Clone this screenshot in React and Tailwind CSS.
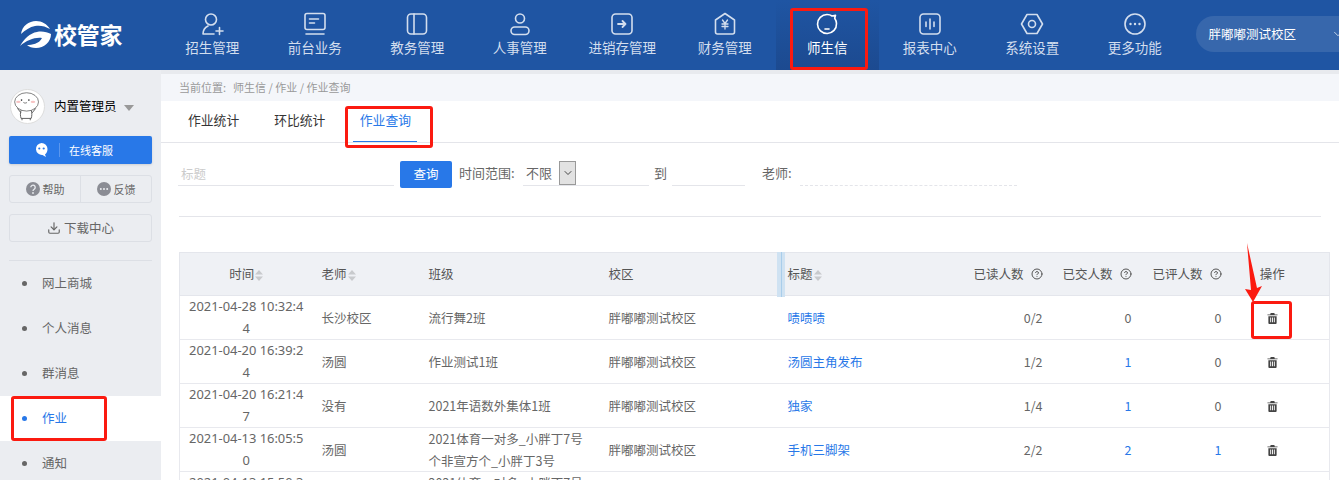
import React from "react";
import { ChevronDown, CircleHelp, Download } from "lucide-react";

const font = { fontFamily: '"Noto Sans CJK SC", sans-serif' };
const latin = { fontFamily: '"Noto Sans", "Noto Sans CJK SC", sans-serif' };

const stroke = { fill: "none", stroke: "currentColor", strokeWidth: 1.6, strokeLinecap: "round", strokeLinejoin: "round" };

const navItems = [
    { name: "招生管理", icon: <><circle cx="11" cy="7.500" r="5.500" /><path d="M3 22c0-4 2-6.500 5-8M3 22h11M16 19h7M19.500 15.500v7" /></> },
    { name: "前台业务", icon: <><rect x="2" y="1.500" width="20" height="16" rx="2" /><path d="M6.500 7h9M6.500 11h5M3 22h18" /></> },
    { name: "教务管理", icon: <><rect x="2.500" y="2" width="19" height="20" rx="3.500" /><path d="M9 2v20" /></> },
    { name: "人事管理", icon: <><circle cx="12" cy="6.500" r="4.500" /><rect x="3" y="15" width="18" height="7.500" rx="3.700" /></> },
    { name: "进销存管理", icon: <><rect x="2" y="2" width="20" height="20" rx="3.500" /><path d="M8 12h7.500M12.500 9l3 3-3 3" strokeWidth="1.800" /></> },
    { name: "财务管理", icon: <><path d="M12 1.500l9.500 6.500v12a2 2 0 0 1-2 2h-15a2 2 0 0 1-2-2V8z" /><path d="M9.500 8l2.500 3.500L14.500 8M9 12h6M9 14.500h6M12 11.500V17" strokeWidth="1.300" /></> },
    { name: "师生信", active: true, icon: <><path d="M12 2.500c2 0 3.800.6 5 1.500l3.500-.8-.8 3c1 1.500 1.800 3.500 1.800 5.300a9.500 9.500 0 1 1-9.500-9z" /><path d="M10 17h4" /></> },
    { name: "报表中心", icon: <><rect x="2" y="2" width="20" height="20" rx="3.500" /><path d="M8 10v4.500M12 7v10M16 10v4.500" /></> },
    { name: "系统设置", icon: <><path d="M7 2.500h10l5.500 9.500-5.500 9.500H7L1.500 12z" /><circle cx="12" cy="12" r="3.500" /></> },
    { name: "更多功能", icon: <><circle cx="12" cy="12" r="10" /><path d="M7.500 12h.01M12 12h.01M16.500 12h.01" strokeWidth="2.400" /></> },
];

const menuItems = [
    { name: "网上商城" },
    { name: "个人消息" },
    { name: "群消息" },
    { name: "作业", active: true },
    { name: "通知" },
];

const rows = [
    { time: "2021-04-28 10:32:44", teacher: "长沙校区", cls: "流行舞2班", title: "啧啧啧", read: "0/2", done: "0", rated: "0" },
    { time: "2021-04-20 16:39:24", teacher: "汤圆", cls: "作业测试1班", title: "汤圆主角发布", read: "1/2", done: "1", rated: "0" },
    { time: "2021-04-20 16:21:47", teacher: "没有", cls: "2021年语数外集体1班", title: "独家", read: "1/4", done: "1", rated: "0" },
    { time: "2021-04-13 16:05:50", teacher: "汤圆", cls: "2021体育一对多_小胖丁7号个非宣方个_小胖丁3号", title: "手机三脚架", read: "2/2", done: "2", rated: "1" },
    { time: "2021-04-13 15:50:36", teacher: "汤圆", cls: "2021体育一对多_小胖丁7号个非宣方个_小胖丁3号", title: "手机三脚架", read: "2/2", done: "2", rated: "1" },
];

const Logo = () => (
    <svg viewBox="0 0 31 28" className="h-[28px] w-[31px] text-white" fill="currentColor">
        <path d="M1 13C2 5 9 0 16 0c6 0 11 3 14 8-5-3-10-4-15-3-5 1-10 4-14 8z" />
        <path d="M0 25c4-7 10-13 17-14 5-1 10 0 14 2 0 8-7 14-15 14-4 0-7-1-9-3 5 0 12-1 15-7-7-1-15 2-22 8z" />
    </svg>
);

const SortIcon = () => (
    <svg viewBox="0 0 8 11" className="ml-px inline-block h-[11px] w-2 text-[#c8cacd]" fill="currentColor">
        <path d="M4 0l4 4.500H0zM0 6.500h8L4 11z" />
    </svg>
);

const Trash = () => (
    <svg viewBox="0 0 12 12" className="mx-auto mt-[2px] h-[11px] w-[11px] text-[#444]" fill="currentColor">
        <path d="M4 0h4l.5 1.500H11.500v1h-11v-1H3.500zM1.500 3.500h9V11a1 1 0 0 1-1 1h-7a1 1 0 0 1-1-1zM3.500 5v5h1V5zM5.500 5v5h1V5zM7.500 5v5h1V5z" />
    </svg>
);

const Avatar = () => (
    <svg viewBox="0 0 36 36" className="h-[35px] w-[35px] rounded-full border border-[#ddd] bg-white">
        <ellipse cx="17" cy="13" rx="13" ry="10" fill="#fff" stroke="#555" strokeWidth="0.800" />
        <path d="M11 22c-1 3-1 6 0 9h11c1-3 1-6 0-9M7 20l4 5M27 20l-4 5M12 31v2M21 31v2" fill="none" stroke="#555" strokeWidth="1" />
        <circle cx="11.500" cy="11" r="0.900" fill="#333" />
        <circle cx="19.500" cy="11" r="0.900" fill="#333" />
        <ellipse cx="8" cy="13" rx="2.500" ry="1.200" fill="#f7c3c3" />
        <ellipse cx="24" cy="13" rx="2.500" ry="1.200" fill="#f7c3c3" />
        <path d="M13.500 13.500c1 1 3 1 4 0" fill="none" stroke="#333" strokeWidth="0.700" />
    </svg>
);

const ChatFace = () => (
    <svg viewBox="0 0 13 14" className="ml-[26px] h-[14px] w-[13px]">
        <path d="M6.500 0a6 6 0 0 1 6 6c0 2.500-1 4.500-2.500 5.500l1 2.500-3.500-2A6 6 0 0 1 6.500 0z" fill="#fff" />
        <circle cx="4.300" cy="5.500" r="1.100" fill="#2878e8" />
        <circle cx="8.700" cy="5.500" r="1.100" fill="#2878e8" />
    </svg>
);

const HelpDisc = () => (
    <svg viewBox="0 0 14 14" className="h-[14px] w-[14px]">
        <circle cx="7" cy="7" r="7" fill="#8a8c94" />
        <path d="M4.800 5.300a2.200 2.200 0 1 1 3.400 1.900c-.8.500-1.200.9-1.200 1.800" fill="none" stroke="#ebedf1" strokeWidth="1.300" />
        <circle cx="7" cy="11" r="0.900" fill="#ebedf1" />
    </svg>
);

const FeedbackDisc = () => (
    <svg viewBox="0 0 14 14" className="h-[14px] w-[14px]">
        <circle cx="7" cy="7" r="7" fill="#8a8c94" />
        <circle cx="3.800" cy="7" r="1" fill="#ebedf1" />
        <circle cx="7" cy="7" r="1" fill="#ebedf1" />
        <circle cx="10.200" cy="7" r="1" fill="#ebedf1" />
    </svg>
);

const Header = () => (
    <header className="flex h-[70px] items-stretch overflow-hidden bg-[#1f55a3]">
        <div className="flex w-[161px] shrink-0 items-center pb-[1px] pl-[20px]">
            <Logo />
            <span className="ml-[3px] text-[23px] font-bold leading-none tracking-[-0.3px] text-white">校管家</span>
        </div>
        {navItems.map((item) => (
            <div
                key={item.name}
                className={`flex w-[102.500px] shrink-0 flex-col items-center pt-[12px] ${item.active ? "bg-gradient-to-b from-[#1f55a3] to-[#1c4a90] text-white" : "text-[#d3deee]"}`}
            >
                <svg viewBox="0 0 24 24" className="h-[24px] w-[24px]" style={stroke}>
                    {item.icon}
                </svg>
                <span className="whitespace-nowrap text-[13.500px] leading-[22px]">{item.name}</span>
            </div>
        ))}
        <div className="ml-[9.500px] mt-[16px] flex h-[36px] w-[200px] shrink-0 items-center rounded-l-[18px] bg-[#3767ac] pl-[13px] text-[12.500px] text-white">
            <span className="whitespace-nowrap">胖嘟嘟测试校区</span>
            <ChevronDown className="ml-[35px] h-[14px] w-[14px] text-[#d3deee]" strokeWidth={1.500} />
        </div>
    </header>
);

const Sidebar = () => (
    <aside className="h-[410px] w-[161px] shrink-0 overflow-hidden bg-[#ebedf1]">
        <div className="flex items-center pl-[10px] pt-[19px]">
            <Avatar />
            <span className="ml-[9px] whitespace-nowrap text-[12.500px] text-black">内置管理员</span>
            <span className="ml-[7px] mt-[2px] h-0 w-0 border-x-[5px] border-t-[6px] border-x-transparent border-t-[#999]"></span>
        </div>
        <div className="mx-[9px] mt-[12px] flex h-[28px] items-center rounded-[2px] bg-[#2878e8] text-[11px] text-white shadow-sm">
            <ChatFace />
            <span className="ml-[11px] h-[14px] w-px bg-[#5b97ee]"></span>
            <span className="ml-[9px]">在线客服</span>
        </div>
        <div className="mx-[9px] mt-[11px] flex h-[28px] items-center rounded-[3px] border border-[#dcdfe5] text-[11px] text-[#666]">
            <div className="flex flex-1 items-center justify-center gap-[3px]">
                <HelpDisc />
                <span>帮助</span>
            </div>
            <span className="h-full w-px bg-[#dcdfe5]"></span>
            <div className="flex flex-1 items-center justify-center gap-[3px]">
                <FeedbackDisc />
                <span>反馈</span>
            </div>
        </div>
        <div className="mx-[9px] mt-[11px] flex h-[28px] items-center justify-center gap-[3px] rounded-[3px] border border-[#dcdfe5] text-[12.500px] text-[#666]">
            <Download className="h-[14px] w-[14px]" />
            <span>下载中心</span>
        </div>
        <div className="mx-[9px] mt-[18px] h-px bg-[#dcdfe5]"></div>
        <ul>
            {menuItems.map((item) => (
                <li
                    key={item.name}
                    className={`flex h-[45px] items-center pl-[22px] text-[12.500px] ${item.active ? "bg-white text-[#2878e8]" : "text-[#666]"}`}
                >
                    <span className={`h-[5px] w-[5px] rounded-full ${item.active ? "bg-[#2878e8]" : "bg-[#666]"}`}></span>
                    <span className="ml-[15px]">{item.name}</span>
                </li>
            ))}
        </ul>
    </aside>
);

const Filters = () => (
    <div className="mx-[18px] flex h-[74px] border-b border-[#e4e5ea] pt-[18px] text-[13px] text-[#666]">
        <div className="-ml-px h-[25px] w-[216px] border-b border-[#e4e5ea] pl-[3px] text-[12.500px] leading-[25px] text-[#ccc]">标题</div>
        <button className="ml-[6px] h-[27px] w-[52px] rounded-[2px] bg-[#2878e8] text-[12.500px] text-white">查询</button>
        <span className="ml-[7px] w-[56px] whitespace-nowrap leading-[24px]">时间范围:</span>
        <div className="ml-[8px] flex h-[25px] w-[126px] items-start border-b border-[#e4e5ea] pl-[3px]">
            <span className="leading-[24px]">不限</span>
            <span className="ml-[7px] flex h-[24px] w-[17px] items-center justify-center border border-[#999] bg-[#e2e2e2]">
                <ChevronDown className="h-[12px] w-[12px] text-[#333]" strokeWidth={1.800} />
            </span>
        </div>
        <span className="ml-[5px] leading-[24px]">到</span>
        <div className="ml-[5px] h-[25px] w-[73px] border-b border-[#e4e5ea]"></div>
        <span className="ml-[17px] w-[30px] whitespace-nowrap leading-[24px]">老师:</span>
        <div className="ml-[8px] h-[25px] w-[217px] border-b border-dashed border-[#e4e5ea]"></div>
    </div>
);

const Table = () => (
    <div className="relative ml-[18px] mr-[9px] mt-[35px]">
        <table className="w-full table-fixed border-collapse text-[12.500px] text-[#666]">
            <colgroup>
                <col className="w-[133px]" />
                <col className="w-[107px]" />
                <col className="w-[180px]" />
                <col className="w-[179px]" />
                <col className="w-[185px]" />
                <col className="w-[87px]" />
                <col className="w-[89px]" />
                <col className="w-[90px]" />
                <col />
            </colgroup>
            <thead>
                <tr className="h-[43px] border border-[#e4e6ec] bg-[#eff1f5] text-[#555]">
                    <th className="text-center font-normal">时间<SortIcon /></th>
                    <th className="pl-[9px] text-left font-normal">老师<SortIcon /></th>
                    <th className="pl-[9px] text-left font-normal">班级</th>
                    <th className="pl-[9px] text-left font-normal">校区</th>
                    <th className="pl-[9px] text-left font-normal">标题<SortIcon /></th>
                    {["已读人数", "已交人数", "已评人数"].map((h) => (
                        <th key={h} className="whitespace-nowrap pr-[8px] text-right font-normal">
                            {h}
                            <CircleHelp className="ml-[7px] inline-block h-[12px] w-[12px] align-[-1.500px]" strokeWidth={2} />
                        </th>
                    ))}
                    <th className="pr-[14px] text-center font-normal">操作</th>
                </tr>
            </thead>
            <tbody>
                {rows.map((row, i) => (
                    <tr key={i} className="h-[44px] border border-[#e8e9ee] leading-[21.500px]">
                        <td className="break-all px-[8px] text-center text-[12.900px]" style={latin}>{row.time}</td>
                        <td className="pl-[9px]">{row.teacher}</td>
                        <td className="pl-[9px] pr-[12px]">{row.cls}</td>
                        <td className="pl-[9px]">{row.campus || "胖嘟嘟测试校区"}</td>
                        <td className="pl-[9px] text-[#2878e8]">{row.title}</td>
                        <td className="pr-[8px] text-right">{row.read}</td>
                        <td className={`pr-[8px] text-right ${row.done !== "0" ? "text-[#2878e8]" : ""}`}>{row.done}</td>
                        <td className={`pr-[8px] text-right ${row.rated !== "0" ? "text-[#2878e8]" : ""}`}>{row.rated}</td>
                        <td className="pr-[14px]"><Trash /></td>
                    </tr>
                ))}
            </tbody>
        </table>
        {/* column resize handle */}
        <div className="absolute left-[598px] top-0 flex h-[45px] w-[8px] justify-center bg-[#cfe2f2]">
            <span className="h-full w-px bg-[#a9cdea]"></span>
        </div>
    </div>
);

export default function App() {
    return (
        <div className="relative h-[480px] w-[1339px] overflow-hidden bg-white" style={font}>
            <Header />
            <div className="flex">
                <Sidebar />
                <main className="min-w-0 flex-1">
                    <div className="h-[4px] bg-[#e8eaee]"></div>
                    <div className="flex h-[27px] items-center bg-[#f4f6fa] pl-[18px] text-[11px] text-[#999]">
                        <span className="w-[49px] whitespace-nowrap">当前位置:</span>
                        <span className="ml-[5px]">师生信 / 作业 / 作业查询</span>
                    </div>
                    <div className="flex h-[42px] border-b border-[#e4e5ea] pl-[27px] text-[12.800px] text-[#333]">
                        <span className="pt-[9px]">作业统计</span>
                        <span className="ml-[35px] pt-[9px]">环比统计</span>
                        <span className="ml-[28px] h-[41px] w-[64px] border-b border-[#2878e8] pt-[9px] text-center text-[#2878e8]">作业查询</span>
                    </div>
                    <Filters />
                    <Table />
                </main>
            </div>
            {/* red annotations from the screenshot */}
            <div className="absolute left-[790px] top-[8px] h-[62px] w-[78px] rounded-[3px] border-[3px] border-[#fb1a10]"></div>
            <div className="absolute left-[11px] top-[396px] h-[45px] w-[96px] rounded-[3px] border-[3px] border-[#fb1a10]"></div>
            <div className="absolute left-[345px] top-[106px] h-[42px] w-[88px] rounded-[3px] border-[3px] border-[#fb1a10]"></div>
            <div className="absolute left-[1251px] top-[301px] h-[38px] w-[41px] rounded-[3px] border-[3px] border-[#fb1a10]"></div>
            <svg viewBox="0 0 20 60" className="absolute left-[1243px] top-[243px] h-[60px] w-[20px]" fill="#fb1a10">
                <path d="M4 0L14 45L19 43L10 59L2 46L8 47Z" />
            </svg>
        </div>
    );
}
